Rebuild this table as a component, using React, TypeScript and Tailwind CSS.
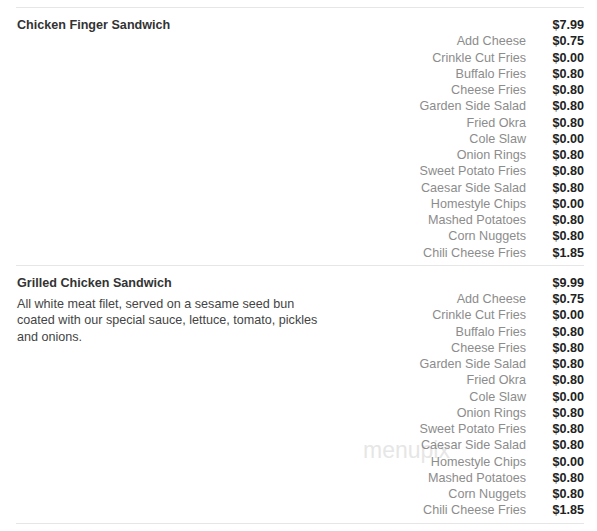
const sides = [
  ["Add Cheese", "$0.75"],
  ["Crinkle Cut Fries", "$0.00"],
  ["Buffalo Fries", "$0.80"],
  ["Cheese Fries", "$0.80"],
  ["Garden Side Salad", "$0.80"],
  ["Fried Okra", "$0.80"],
  ["Cole Slaw", "$0.00"],
  ["Onion Rings", "$0.80"],
  ["Sweet Potato Fries", "$0.80"],
  ["Caesar Side Salad", "$0.80"],
  ["Homestyle Chips", "$0.00"],
  ["Mashed Potatoes", "$0.80"],
  ["Corn Nuggets", "$0.80"],
  ["Chili Cheese Fries", "$1.85"],
];

const items = [
  { name: "Chicken Finger Sandwich", price: "$7.99", desc: "" },
  {
    name: "Grilled Chicken Sandwich",
    price: "$9.99",
    desc: "All white meat filet, served on a sesame seed bun coated with our special sauce, lettuce, tomato, pickles and onions.",
  },
];

export default function App() {
  return (
    <div className="relative min-h-[531px] bg-white pl-4 pr-[13px] pt-[7px] font-['Liberation_Sans',Arial,sans-serif] text-[12.6px]">
      {/* watermark sits behind the menu text */}
      <span className="absolute left-[363px] top-[433px] text-[23px] font-light text-[#dcdcdc] opacity-70">menupix</span>
      {items.map((item) => (
        <div key={item.name} className="relative flex border-t border-[#e6e6e6] pt-[9px] pb-[4px]">
          <div className="w-[320px] pl-px">
            <h3 className="leading-[16px] font-bold text-[#333]">{item.name}</h3>
            {item.desc && (
              <p className="mt-[5px] w-[315px] leading-[16.5px] text-[#444]">{item.desc}</p>
            )}
          </div>
          <div className="flex-1 grid grid-cols-[1fr_58px] leading-[16.25px]">
            <span></span>
            <span className="text-right font-bold text-[#222]">{item.price}</span>
            {sides.map(([n, p]) => (
              <div key={n} className="contents">
                <span className="text-right text-[#8c8c8c]">{n}</span>
                <span className="text-right font-bold text-[#222]">{p}</span>
              </div>
            ))}
          </div>
        </div>
      ))}
      <div className="border-t border-[#e6e6e6]"></div>
    </div>
  );
}
